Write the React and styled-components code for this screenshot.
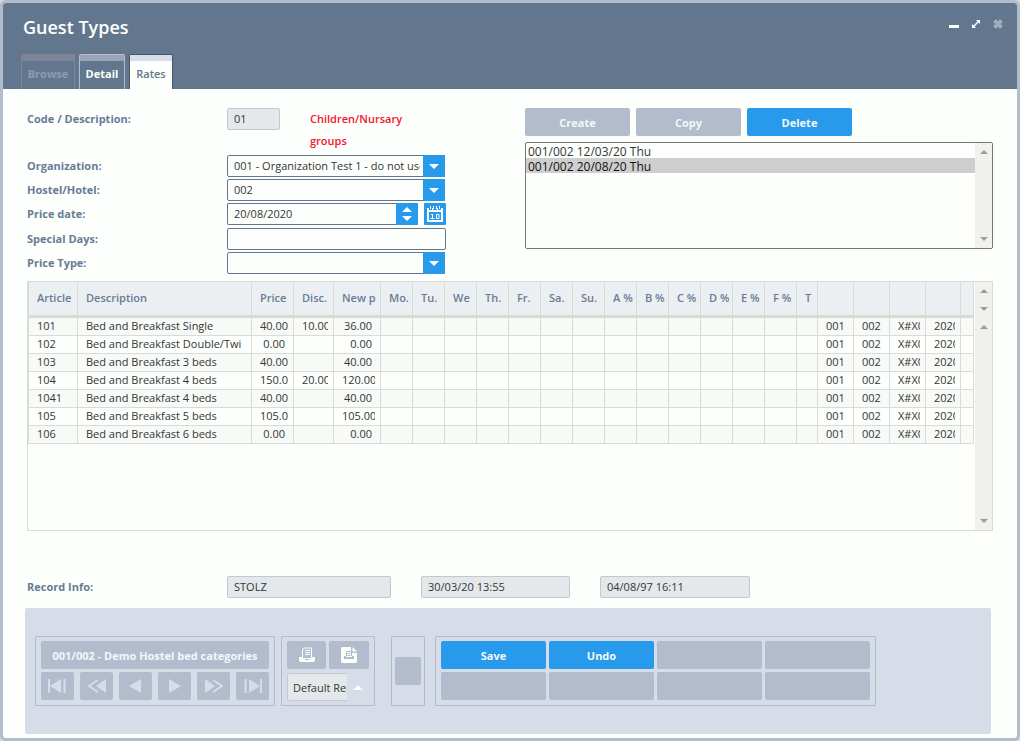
import React, { useState } from 'react';
import styled, { createGlobalStyle } from 'styled-components'

const GlobalStyle = createGlobalStyle`
* { box-sizing: border-box; }
body {
  margin: 0;
  background-color: #d5d8d6;
  color: #323634;
}
body, button, input, select, table {
  font-family: "Open Sans", "Noto Sans", sans-serif;
  font-size: 11px;
}
`
const Window = styled.div`
border: 3px solid #b3bccd;
border-radius: 6px;
background-color: #fdfffc;
overflow: hidden;
`
const Header = styled.header`
background-color: #62778e;
height: 86px;
padding: 0 14px 0 18px;
display: flex;
flex-direction: column;
justify-content: space-between;
`
const TitleBar = styled.div`
display: flex;
justify-content: space-between;
align-items: flex-start;
padding: 12px 0 0 2px;
`
const Title = styled.h1`
color: #fdfffc;
font-size: 18px;
font-weight: 600;
line-height: 24px;
margin: 0;
`
const WindowTools = styled.div`
display: flex;
gap: 12px;
padding-top: 4px;
`
const ToolButton = styled.button`
background: none;
border: 0;
padding: 0;
width: 10px;
height: 10px;
svg { display: block; }
`
const Tabs = styled.nav`
display: flex;
gap: 4px;
`
const Tab = styled.button`
width: ${p => p.$width}px;
height: 35px;
padding: 4px 0 0;
border: 1px solid ${p => p.$active ? '#46566b' : p.disabled ? '#7c8698' : '#b3bccd'};
border-bottom: 0;
border-radius: 2px 2px 0 0;
box-shadow: inset 0 6px 0 ${p => p.$active ? '#d7dde9' : p.disabled ? '#7c8698' : '#99a4b8'};
background-color: ${p => p.$active ? '#fdfffc' : 'transparent'};
color: ${p => p.$active ? '#62778e' : p.disabled ? '#8f9bad' : '#fdfffc'};
font-weight: ${p => p.$active ? 600 : 700};
line-height: 22px;
`
const Body = styled.main`
padding: 19px 24px 10px;
`
const TopArea = styled.div`
display: flex;
justify-content: space-between;
gap: 40px;
`
const Form = styled.form`
display: grid;
grid-template-columns: 200px 219px;
row-gap: 2px;
align-items: start;
`
const Label = styled.label`
color: #687b96;
font-weight: 700;
line-height: 22px;
`
const CodeCell = styled.div`
display: flex;
align-items: flex-start;
gap: 30px;
padding-bottom: 1px;
`
const Description = styled.span`
color: #f5142d;
font-weight: 600;
line-height: 22px;
width: 110px;
`
const TextInput = styled.input`
width: ${p => p.$width ? p.$width + 'px' : '100%'};
height: 22px;
padding: 0 6px 2px;
border: 1px solid ${p => p.readOnly ? '#c0c8d2' : '#62778e'};
border-radius: 2px;
background-color: ${p => p.readOnly ? '#e5e8eb' : '#fdfffc'};
color: #323634;
outline: 0;
`
const SelectBox = styled.div`
position: relative;
margin-right: 1px;
height: 22px;
`
const Select = styled.select`
appearance: none;
width: 100%;
height: 22px;
padding: 0 24px 2px 6px;
border: 1px solid #62778e;
border-radius: 2px;
background-color: #fdfffc;
color: #323634;
`
const SelectArrow = styled.span`
position: absolute;
top: 0;
right: 0;
width: 22px;
height: 22px;
background-color: #289aeb;
display: flex;
align-items: center;
justify-content: center;
pointer-events: none;
`
const DateCell = styled.div`
display: flex;
align-items: flex-start;
height: 23px;
`
const Spinner = styled.button`
width: 22px;
height: 22px;
padding: 0;
border: 0;
background-color: #289aeb;
display: flex;
flex-direction: column;
align-items: center;
justify-content: center;
gap: 4px;
`
const DateInput = styled(TextInput)`
flex: 1;
min-width: 0;
border-right: 0;
border-radius: 2px 0 0 2px;
`
const CalendarButton = styled.button`
width: 22px;
height: 22px;
margin-left: 6px;
padding: 0;
border: 0;
border-radius: 1px;
background-color: #289aeb;
svg { display: block; margin: 0 auto; }
`
const Side = styled.section`
width: 468px;
`
const Actions = styled.div`
display: flex;
gap: 6px;
margin-bottom: 6px;
`
const Button = styled.button`
width: ${p => p.$width || 105}px;
height: 28px;
padding: 0;
border: 0;
border-radius: 2px;
background-color: ${p => p.$primary ? '#289aeb' : '#b3bccd'};
color: #f4f7fa;
font-weight: 700;
display: flex;
align-items: center;
justify-content: center;
`
const ListFrame = styled.div`
display: flex;
height: 107px;
border: 1px solid #767876;
border-radius: 2px;
`
const ListBox = styled.select`
flex: 1;
height: 100%;
padding: 0;
border: 0;
outline: 0;
overflow: hidden;
background-color: transparent;
color: #323634;
option {
  padding: 0 2px;
  height: 15px;
  min-height: 15px;
  font-size: 12px;
  line-height: 14px;
}
`
const Scrollbar = styled.div`
width: 17px;
background-color: #f0f1ef;
display: flex;
flex-direction: column;
justify-content: space-between;
align-items: center;
padding: 7px 0;
${p => p.$short && 'height: 36px;'}
${p => p.$fill && 'flex: 1;'}
`
const TablePanel = styled.div`
display: flex;
gap: 1px;
height: 250px;
margin-top: 7px;
border: 1px solid #d9dbd9;
`
const TableArea = styled.div`
flex: 1;
min-width: 0;
`
const Table = styled.table`
width: 100%;
table-layout: fixed;
border-collapse: separate;
border-spacing: 0;
`
const Th = styled.th`
height: 36px;
padding: 0 3px 2px 8px;
background-color: #ebeff2;
border-right: 1px solid #d9dbd9;
border-bottom: 3px solid #d9dbd9;
color: #687b96;
font-weight: 600;
text-align: left;
&:first-child { border-left: 1px solid #d9dbd9; }
`
const Td = styled.td`
height: 18px;
padding: 0 5px 2px 8px;
border-right: 1px solid #d9dbd9;
border-bottom: 1px solid #d9dbd9;
&:first-child { border-left: 1px solid #d9dbd9; }
tr:nth-child(odd) > & { background-color: #f8faf8; }
`
const Clip = styled.div`
overflow: hidden;
white-space: nowrap;
line-height: 15px;
${p => p.$number && 'text-align: right; padding-right: 3px;'}
`
const ScrollColumn = styled.div`
display: flex;
flex-direction: column;
`
const RecordInfo = styled.div`
display: flex;
margin-top: 45px;
`
const RecordLabel = styled(Label)`
width: 200px;
`
const RecordFields = styled.div`
display: flex;
gap: 30px;
`
const Footer = styled.footer`
margin: 0 26px 4px 22px;
height: 126px;
padding: 28px 10px;
border-radius: 2px;
background-color: #d7dde8;
display: flex;
align-items: flex-start;
`
const Group = styled.div`
height: 70px;
margin-right: ${p => p.$gap || 0}px;
padding: 4px 5px;
border: 1px solid #b3bccd;
border-radius: 1px;
display: flex;
flex-direction: column;
gap: 3px;
`
const GroupRow = styled.div`
display: flex;
gap: ${p => p.$gap}px;
`
const SingleGroup = styled(Group)`
padding: 0 3px;
justify-content: center;
`
const ReportBox = styled.div`
display: flex;
align-items: center;
padding-top: 1px;
`
const ReportSelect = styled.select`
appearance: none;
width: 60px;
height: 28px;
padding: 0 0 0 5px;
border: 1px solid #c3cad4;
border-right: 0;
border-radius: 2px 0 0 2px;
background-color: #e5e8eb;
color: #323634;
`
const ReportArrow = styled.span`
width: 22px;
display: flex;
justify-content: center;
`

const Triangle = ({ up, size = 10, color = '#fdfffc' }) => (
    <svg width={size} height={size / 2} viewBox="0 0 10 5" aria-hidden="true">
        <path d={up ? 'M0 5L5 0L10 5Z' : 'M0 0H10L5 5Z'} fill={color} />
    </svg>
)

const ScrollArrow = ({ up }) => <Triangle up={up} size={8} color="#9c9e9c" />

const CalendarIcon = () => (
    <svg width="18" height="18" viewBox="0 0 18 18" aria-hidden="true">
        <path d="M1 3H3V5H6V3H7V5H11V3H12V5H15V3H17V17H1Z" fill="#fdfffc" />
        <path d="M4.500 1V4M13.500 1V4M7.500 1V4M10.500 1V4" stroke="#fdfffc" />
        <path d="M3 7H15V15H3Z" fill="#289aeb" />
        <path d="M5 9H7V14H6V10H5ZM4.500 13H8.500V14H4.500Z" fill="#fdfffc" />
        <path d="M10.500 9.500H13V13.500H10.500Z" stroke="#fdfffc" fill="none" />
    </svg>
)

const navIcons = [
    ['First', 'M1 0V14M16.5 0V14', 'M13 0V14L2 7Z'],
    ['Fast back', 'M11 1L2 7L11 13', 'M19 0V14L9 7Z'],
    ['Previous', '', 'M15 0V14L3 7Z'],
    ['Next', '', 'M4 0V14L16 7Z'],
    ['Fast forward', 'M9 1L18 7L9 13', 'M1 0V14L11 7Z'],
    ['Last', 'M2.5 0V14M18 0V14', 'M6 0V14L17 7Z'],
]

const PrintIcon = () => (
    <svg width="16" height="16" viewBox="0 0 16 16" aria-hidden="true">
        <path d="M3.500 11V3L4.500 1H12.500V11" fill="none" stroke="#fdfffc" />
        <path d="M6 3.500H11M6 5.500H11M6 7.500H11" stroke="#fdfffc" />
        <path d="M0 10H3V11H13V10H16V13L15 15H1L0 13Z" fill="#fdfffc" />
        <path d="M6 12.500H10" stroke="#b3bccd" />
    </svg>
)

const ReportIcon = () => (
    <svg width="16" height="16" viewBox="0 0 16 16" aria-hidden="true">
        <path d="M1 0H10V6H16V15L15 16H1L0 15V1Z" fill="#fdfffc" />
        <path d="M11.500 0L16 4.500H11.500Z" fill="#fdfffc" />
        <path d="M5.500 9V4.500H10.500V9M6.500 6.500H9.500M6.500 8.500H9.500" fill="none" stroke="#b3bccd" />
        <path d="M3 9H5V10H11V9H13V12H3Z" fill="#b3bccd" />
    </svg>
)

const columns = [
    ['Article', 50], ['Description', 174], ['Price', 42], ['Disc.', 40], ['New p', 47],
    ['Mo.', 32], ['Tu.', 32], ['We', 32], ['Th.', 32], ['Fr.', 32], ['Sa.', 32], ['Su.', 32],
    ['A %', 32], ['B %', 32], ['C %', 32], ['D %', 32], ['E %', 32], ['F %', 32], ['T', 21],
    ['', 36], ['', 36], ['', 36], ['', 35], ['', 13],
]

const rates = [
    ['101', 'Bed and Breakfast Single', '40.00', '10.00', '36.00'],
    ['102', 'Bed and Breakfast Double/Twi', '0.00', '', '0.00'],
    ['103', 'Bed and Breakfast 3 beds', '40.00', '', '40.00'],
    ['104', 'Bed and Breakfast 4 beds', '150.00', '20.00', '120.00'],
    ['1041', 'Bed and Breakfast 4 beds', '40.00', '', '40.00'],
    ['105', 'Bed and Breakfast 5 beds', '105.00', '', '105.00'],
    ['106', 'Bed and Breakfast 6 beds', '0.00', '', '0.00'],
]
const blanks = Array(14).fill('')
const keys = ['001', '002', 'X#X0', '2020', '']

const Dropdown = ({ id, options }) => (
    <SelectBox>
        <Select id={id}>
            {options.map(o => <option key={o}>{o}</option>)}
        </Select>
        <SelectArrow><Triangle /></SelectArrow>
    </SelectBox>
)

const RatesTable = () => (
    <TablePanel>
        <TableArea>
            <Table>
                <colgroup>
                    {columns.map(([, width], i) => <col key={i} width={width} />)}
                </colgroup>
                <thead>
                    <tr>{columns.map(([name], i) => <Th key={i}><Clip>{name}</Clip></Th>)}</tr>
                </thead>
                <tbody>
                    {rates.map(row => (
                        <tr key={row[0]}>
                            {[...row, ...blanks, ...keys].map((cell, i) => (
                                <Td key={i}><Clip $number={i > 1 && i < 5}>{cell}</Clip></Td>
                            ))}
                        </tr>
                    ))}
                </tbody>
            </Table>
        </TableArea>
        <ScrollColumn>
            <Scrollbar $short><ScrollArrow up /><ScrollArrow /></Scrollbar>
            <Scrollbar $fill><ScrollArrow up /><ScrollArrow /></Scrollbar>
        </ScrollColumn>
    </TablePanel>
)

const App = () => {
    const [date, setDate] = useState('20/08/2020')
    return (
        <>
            <GlobalStyle />
            <Window>
                <Header>
                    <TitleBar>
                        <Title>Guest Types</Title>
                        <WindowTools>
                            <ToolButton aria-label="Minimize">
                                <svg width="10" height="10"><path d="M0 6H10V9H0Z" fill="#fdfffc" /></svg>
                            </ToolButton>
                            <ToolButton aria-label="Maximize">
                                <svg width="10" height="10">
                                    <path d="M5 1H9V5L7.500 3.500L3.500 7.500L5 9H1V5L2.500 6.500L6.500 2.500Z" fill="#fdfffc" />
                                </svg>
                            </ToolButton>
                            <ToolButton aria-label="Close">
                                <svg width="10" height="10">
                                    <path d="M1.500 1.500L8.500 8.500M8.500 1.500L1.500 8.500" stroke="#a2abb9" strokeWidth="4" />
                                </svg>
                            </ToolButton>
                        </WindowTools>
                    </TitleBar>
                    <Tabs>
                        <Tab $width={54} disabled>Browse</Tab>
                        <Tab $width={46}>Detail</Tab>
                        <Tab $width={44} $active>Rates</Tab>
                    </Tabs>
                </Header>
                <Body>
                    <TopArea>
                        <Form>
                            <Label htmlFor="code">Code / Description:</Label>
                            <CodeCell>
                                <TextInput id="code" $width={53} defaultValue="01" readOnly />
                                <Description>Children/Nursary groups</Description>
                            </CodeCell>
                            <Label htmlFor="organization">Organization:</Label>
                            <Dropdown id="organization" options={['001 - Organization Test 1 - do not use']} />
                            <Label htmlFor="hostel">Hostel/Hotel:</Label>
                            <Dropdown id="hostel" options={['002']} />
                            <Label htmlFor="date">Price date:</Label>
                            <DateCell>
                                <DateInput id="date" value={date} onChange={e => setDate(e.target.value)} />
                                <Spinner type="button" aria-label="Change date">
                                    <Triangle up />
                                    <Triangle />
                                </Spinner>
                                <CalendarButton type="button" aria-label="Calendar"><CalendarIcon /></CalendarButton>
                            </DateCell>
                            <Label htmlFor="special">Special Days:</Label>
                            <TextInput id="special" />
                            <Label htmlFor="type">Price Type:</Label>
                            <Dropdown id="type" options={['']} />
                        </Form>
                        <Side>
                            <Actions>
                                <Button>Create</Button>
                                <Button>Copy</Button>
                                <Button $primary>Delete</Button>
                            </Actions>
                            <ListFrame>
                                <ListBox size={7} defaultValue="2" aria-label="Price dates">
                                    <option value="1">001/002 12/03/20 Thu</option>
                                    <option value="2">001/002 20/08/20 Thu</option>
                                </ListBox>
                                <Scrollbar><ScrollArrow up /><ScrollArrow /></Scrollbar>
                            </ListFrame>
                        </Side>
                    </TopArea>
                    <RatesTable />
                    <RecordInfo>
                        <RecordLabel htmlFor="user">Record Info:</RecordLabel>
                        <RecordFields>
                            <TextInput id="user" $width={164} defaultValue="STOLZ" readOnly />
                            <TextInput $width={149} defaultValue="30/03/20 13:55" aria-label="Changed" readOnly />
                            <TextInput $width={150} defaultValue="04/08/97 16:11" aria-label="Created" readOnly />
                        </RecordFields>
                    </RecordInfo>
                </Body>
                <Footer>
                    <Group $gap={6}>
                        <Button $width={228}>001/002 - Demo Hostel bed categories</Button>
                        <GroupRow $gap={6}>
                            {navIcons.map(([name, line, fill]) => (
                                <Button key={name} $width={33} aria-label={name}>
                                    <svg width="19" height="14" viewBox="0 0 19 14">
                                        <path d={fill} fill="#d7dde8" />
                                        <path d={line} stroke="#d7dde8" strokeWidth="2" fill="none" />
                                    </svg>
                                </Button>
                            ))}
                        </GroupRow>
                    </Group>
                    <Group $gap={16}>
                        <GroupRow $gap={3}>
                            <Button $width={39} aria-label="Print"><PrintIcon /></Button>
                            <Button $width={40} aria-label="Report"><ReportIcon /></Button>
                        </GroupRow>
                        <ReportBox>
                            <ReportSelect aria-label="Report">
                                <option>Default Report</option>
                            </ReportSelect>
                            <ReportArrow><Triangle up /></ReportArrow>
                        </ReportBox>
                    </Group>
                    <SingleGroup $gap={10}>
                        <Button $width={26} aria-label="Extra" />
                    </SingleGroup>
                    <Group>
                        <GroupRow $gap={3}>
                            <Button $primary>Save</Button>
                            <Button $primary>Undo</Button>
                            <Button aria-label="Function 3" />
                            <Button aria-label="Function 4" />
                        </GroupRow>
                        <GroupRow $gap={3}>
                            <Button aria-label="Function 5" />
                            <Button aria-label="Function 6" />
                            <Button aria-label="Function 7" />
                            <Button aria-label="Function 8" />
                        </GroupRow>
                    </Group>
                </Footer>
            </Window>
        </>
    );
}

export default App;
